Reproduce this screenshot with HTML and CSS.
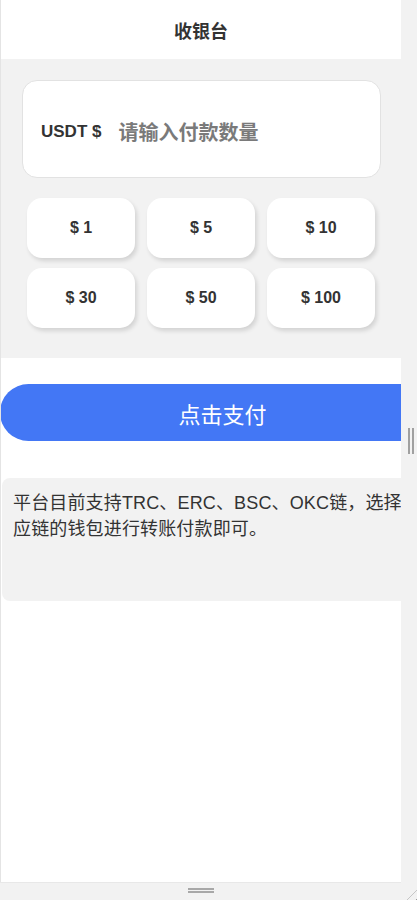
FILE: index.html
```html
<!DOCTYPE html>
<html lang="zh-CN">
<head>
<meta charset="utf-8">
<title>收银台</title>
<link rel="stylesheet" href="styles.css">
</head>
<body>
<div class="shell">
  <main class="frame">
    <header class="topbar">收银台</header>
    <section class="pay-area">
      <label class="amount-card">
        <span class="currency">USDT $</span>
        <input class="amount-input" type="text" placeholder="请输入付款数量">
      </label>
      <div class="presets">
        <button class="preset">$ 1</button>
        <button class="preset">$ 5</button>
        <button class="preset">$ 10</button>
        <button class="preset">$ 30</button>
        <button class="preset">$ 50</button>
        <button class="preset">$ 100</button>
      </div>
    </section>
    <section class="submit-area">
      <button class="submit">点击支付</button>
      <div class="notice">平台目前支持TRC、ERC、BSC、OKC链，选择对应链的钱包进行转账付款即可。</div>
    </section>
  </main>
  <div class="gutter-v"><span class="grip-v"></span></div>
  <div class="gutter-h"><span class="grip-h"></span></div>
  <div class="corner"><span class="grip-corner"></span></div>
</div>
</body>
</html>
```
FILE: styles.css
```css
* { box-sizing: border-box; }

html, body {
  margin: 0;
  padding: 0;
  background: #f2f2f2;
}

body {
  font-family: "Noto Sans CJK SC", "Liberation Sans", sans-serif;
  color: #333;
}

.shell {
  display: grid;
  grid-template-columns: 401px 16px;
  grid-template-rows: 882px 18px;
  width: 417px;
  height: 900px;
  overflow: hidden;
}

.frame {
  background: #fff;
  border-left: 1px solid #e4e4e4;
  overflow: hidden;
  display: flex;
  flex-direction: column;
}

.topbar {
  height: 59px;
  flex: none;
  display: flex;
  align-items: center;
  justify-content: center;
  font-size: 18px;
  font-weight: 700;
  color: #333;
  background: #fff;
}

.pay-area {
  background: #f2f2f2;
  padding: 21px 20px 30px 21px;
  display: flex;
  flex-direction: column;
  gap: 20px;
}

.amount-card {
  height: 98px;
  background: #fff;
  border: 1px solid #e2e2e2;
  border-radius: 15px;
  display: flex;
  align-items: center;
  padding: 5px 0 0 18px;
  gap: 17px;
}

.currency {
  font-family: "Liberation Sans", "Noto Sans CJK SC", sans-serif;
  font-size: 17px;
  font-weight: 700;
  color: #333;
  white-space: nowrap;
}

.amount-input {
  border: 0;
  outline: 0;
  background: transparent;
  font-family: "Noto Sans CJK SC", sans-serif;
  font-size: 20px;
  font-weight: 700;
  color: #333;
  width: 220px;
  padding: 0;
}

.amount-input::placeholder {
  color: #7a7a7a;
}

.presets {
  display: grid;
  grid-template-columns: repeat(3, 108px);
  grid-auto-rows: 60px;
  column-gap: 12px;
  row-gap: 10px;
  padding-left: 5px;
}

.preset {
  border: 0;
  background: #fff;
  border-radius: 15px;
  box-shadow: 2px 3px 4px rgba(0, 0, 0, 0.13);
  font-family: "Liberation Sans", sans-serif;
  font-size: 16px;
  font-weight: 700;
  color: #333;
  padding: 0;
}

.submit-area {
  background: #fff;
  padding-top: 26px;
  display: flex;
  flex-direction: column;
  gap: 37px;
}

.submit {
  width: 445px;
  height: 57px;
  flex: none;
  border: 0;
  border-radius: 28.5px;
  background: #4377f5;
  color: #fff;
  font-family: "Noto Sans CJK SC", sans-serif;
  font-size: 22px;
  padding: 0;
  margin-left: -1px;
}

.notice {
  width: 440px;
  height: 123px;
  margin-left: 1px;
  background: #f2f2f2;
  border-radius: 8px;
  padding: 12px 13px 0 11px;
  font-family: "Liberation Sans", "Noto Sans CJK SC", sans-serif;
  font-size: 18px;
  line-height: 26px;
  letter-spacing: 0.15px;
  color: #333;
}

.gutter-v {
  background: #f2f2f2;
  display: flex;
  align-items: center;
  justify-content: center;
}

.grip-v {
  width: 6px;
  height: 26px;
  border-left: 2px solid #a0a0a0;
  border-right: 2px solid #a0a0a0;
  margin-left: 4px;
}

.gutter-h {
  background: #f2f2f2;
  border-top: 1px solid #e8e8e8;
  display: flex;
  align-items: center;
  justify-content: center;
}

.grip-h {
  width: 26px;
  height: 5px;
  border-top: 2px solid #a8a8a8;
  border-bottom: 2px solid #a8a8a8;
  margin-top: -2px;
}

.corner {
  background: #f2f2f2;
  position: relative;
  overflow: hidden;
}

.grip-corner {
  position: absolute;
  right: -3px;
  bottom: -3px;
  width: 16px;
  height: 16px;
  background: repeating-linear-gradient(135deg,
    transparent 0 3px,
    #9a9a9a 3px 5px,
    transparent 5px 7px);
  clip-path: polygon(100% 0, 100% 100%, 0 100%);
}
```
